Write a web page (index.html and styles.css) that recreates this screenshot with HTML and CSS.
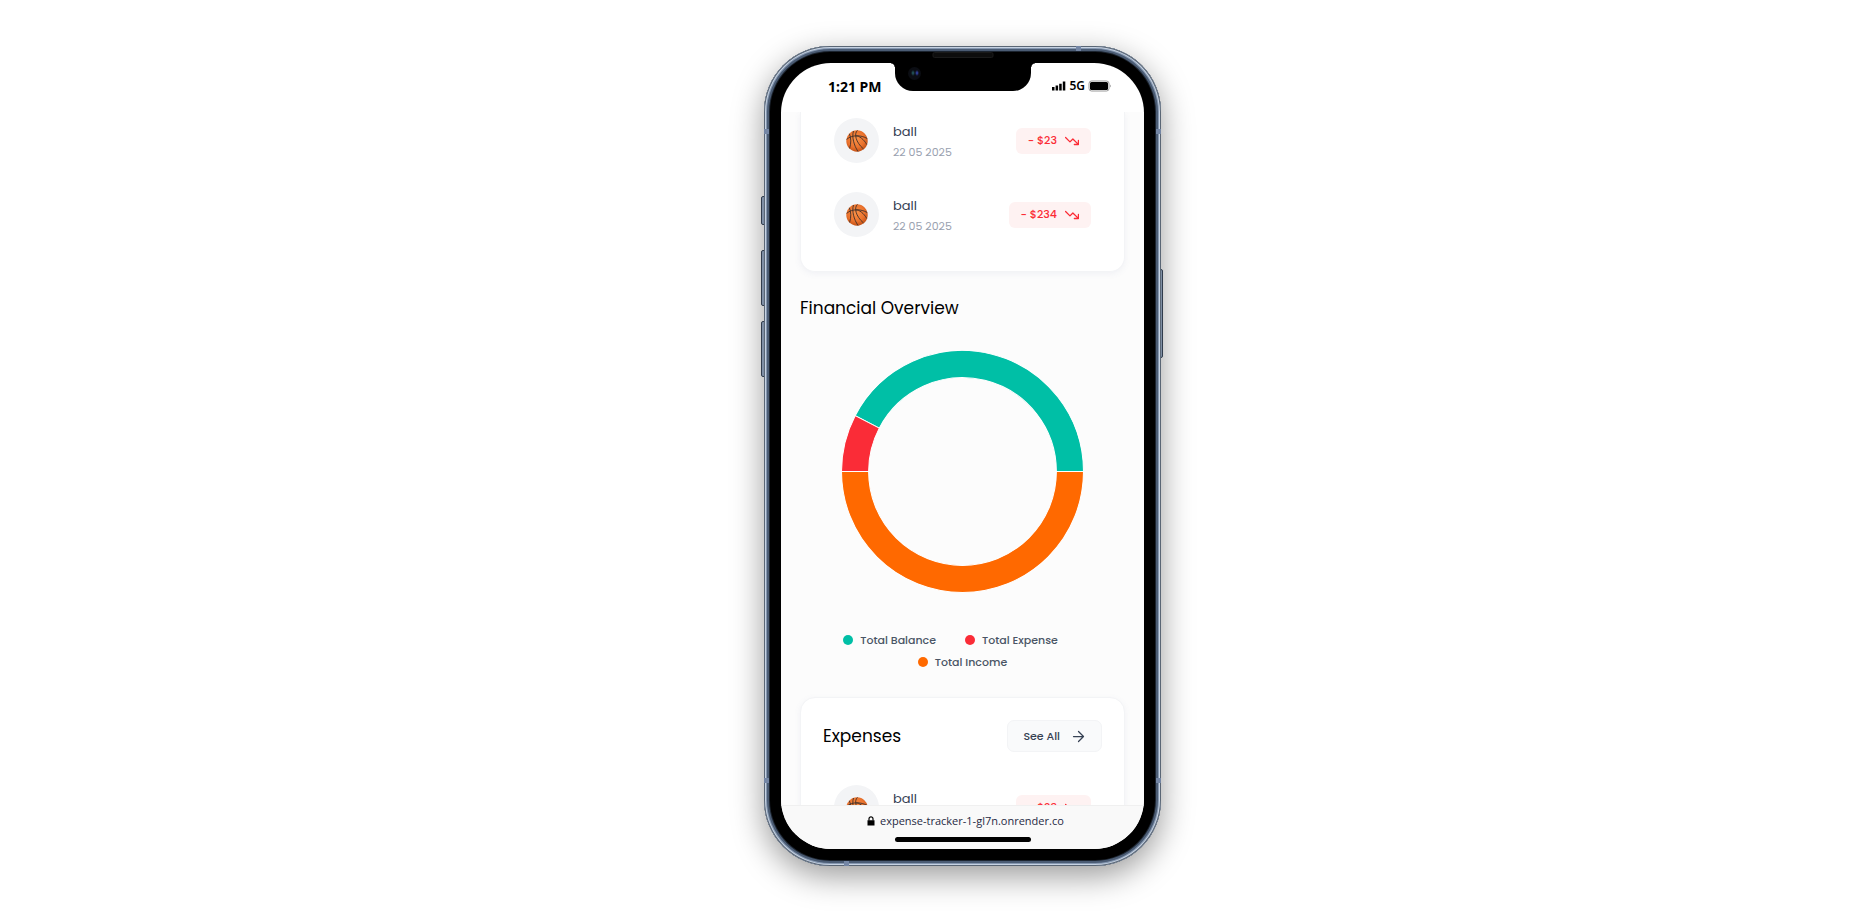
FILE: index.html
```html
<!DOCTYPE html>
<html lang="en">
<head>
<meta charset="utf-8">
<meta name="viewport" content="width=device-width, initial-scale=1">
<title>Expense Tracker</title>
<link rel="stylesheet" href="styles.css">
</head>
<body>
<svg class="defs" width="0" height="0" aria-hidden="true">
  <defs>
    <radialGradient id="ball-fill" cx="0.45" cy="0.4" r="0.62">
      <stop offset="0" stop-color="#fb9247"/>
      <stop offset="0.65" stop-color="#ea722d"/>
      <stop offset="1" stop-color="#c04f14"/>
    </radialGradient>
    <symbol id="ball" viewBox="0 0 22 22">
      <circle cx="11" cy="11" r="10.7" fill="url(#ball-fill)"/>
      <g fill="none" stroke="#41302a" stroke-width="0.9">
        <path d="M7.500 1C5.600 7 8 15.500 12 21.500"/>
        <path d="M11.500 0.400C7.800 3.500 9.500 12 17.500 19"/>
        <path d="M0.600 9.400C6 4.600 15 4.800 21.300 8.600"/>
        <path d="M10 6C13 5.500 18 9.500 20.800 14.500"/>
        <path d="M3.400 3.800C5.200 8 5.200 13.500 3.600 18.400"/>
      </g>
    </symbol>
    <symbol id="trend-down" viewBox="0 0 24 24">
      <path d="M1 6L8.500 13.500L13.500 8.500L22 17M16 18H23V11" fill="none" stroke="currentColor" stroke-width="2.200" stroke-linecap="round" stroke-linejoin="round"/>
    </symbol>
  </defs>
</svg>
<main class="stage">
  <div class="phone">
    <span class="key key-mute"></span>
    <span class="key key-up"></span>
    <span class="key key-down"></span>
    <span class="key key-power"></span>
    <div class="frame">
      <span class="band band-left-top"></span>
      <span class="band band-left-bottom"></span>
      <span class="band band-right-top"></span>
      <span class="band band-right-bottom"></span>
      <span class="band band-top"></span>
      <span class="band band-bottom"></span>
      <span class="speaker"></span>
      <div class="screen">
        <div class="notch"><span class="camera"></span></div>
        <header class="status">
          <time class="clock">1:21 PM</time>
          <div class="signals">
            <svg width="14" height="10" viewBox="0 0 14 10" aria-hidden="true">
              <path d="M0 6h2.500v3.500H0zM3.600 4.500h2.500v5H3.600zM7.200 2.800h2.500v6.700H7.200zM10.800 0.500h2.500v9h-2.500z"/>
            </svg>
            <span>5G</span>
            <svg width="24" height="12" viewBox="0 0 24 12" aria-hidden="true">
              <rect x="1" y="1" width="20" height="10" rx="2.500" fill="none" stroke="#999"/>
              <rect x="2" y="2" width="18" height="8" rx="1.500"/>
              <path d="M22 4.500q1.500 1.500 0 3z" fill="#777"/>
            </svg>
          </div>
        </header>
        <div class="content">
          <section class="card card-top">
            <ul class="rows">
              <li class="row">
                <span class="avatar"><svg width="22" height="22"><use href="#ball"/></svg></span>
                <div class="info"><p class="name">ball</p><p class="date">22 05 2025</p></div>
                <span class="pill">- $23 <svg width="14" height="14"><use href="#trend-down"/></svg></span>
              </li>
              <li class="row">
                <span class="avatar"><svg width="22" height="22"><use href="#ball"/></svg></span>
                <div class="info"><p class="name">ball</p><p class="date">22 05 2025</p></div>
                <span class="pill">- $234 <svg width="14" height="14"><use href="#trend-down"/></svg></span>
              </li>
            </ul>
          </section>
          <section class="overview">
            <h2 class="title">Financial Overview</h2>
            <svg class="donut" viewBox="-121 -121 242 242" role="img" aria-label="Balance, expense and income">
              <g stroke="#fff" stroke-width="1">
                <path fill="#00bfa6" d="M120.500 0A120.500 120.500 0 0 0 -106.900 -55.600L-82.900 -43.200A93.500 93.500 0 0 1 93.500 0Z"/>
                <path fill="#fa2c37" d="M-106.900 -55.600A120.500 120.500 0 0 0 -120.500 0L-93.500 0A93.500 93.500 0 0 1 -82.900 -43.200Z"/>
                <path fill="#ff6900" d="M-120.500 0A120.500 120.500 0 0 0 120.500 0L93.500 0A93.500 93.500 0 0 1 -93.500 0Z"/>
              </g>
            </svg>
            <ul class="legend">
              <li class="key-item balance">Total Balance</li>
              <li class="key-item expense">Total Expense</li>
              <li class="key-item income">Total Income</li>
            </ul>
          </section>
          <section class="card card-next">
            <div class="card-head">
              <h2 class="title">Expenses</h2>
              <button class="see-all" type="button">See All
                <svg width="15" height="15" viewBox="0 0 24 24" fill="none" stroke="currentColor" stroke-width="2" stroke-linecap="round" stroke-linejoin="round" aria-hidden="true"><path d="M4 12H20M12 4L20 12L12 20"/></svg>
              </button>
            </div>
            <ul class="rows">
              <li class="row">
                <span class="avatar"><svg width="22" height="22"><use href="#ball"/></svg></span>
                <div class="info"><p class="name">ball</p><p class="date"></p></div>
                <span class="pill">- $23 <svg width="14" height="14"><use href="#trend-down"/></svg></span>
              </li>
            </ul>
          </section>
        </div>
        <footer class="browser-bar">
          <div class="address">
            <svg width="8" height="10" viewBox="0 0 8 10" aria-hidden="true"><path d="M0.500 4.200h7v5.300h-7z"/><path d="M2 4.500V2.800a2 2 0 0 1 4 0v1.700" fill="none" stroke="#000" stroke-width="1.200"/></svg>
            <span class="url">expense-tracker-1-gl7n.onrender.com</span>
          </div>
          <span class="home"></span>
        </footer>
      </div>
    </div>
  </div>
</main>
</body>
</html>
```

FILE: styles.css
```css
* { box-sizing: border-box; }

body {
  margin: 0;
  background: #fff;
  font-family: Poppins, Inter, "Noto Sans", sans-serif;
  color: #000;
}

ul, p, h2 { margin: 0; padding: 0; list-style: none; }
svg { display: block; flex: none; }
.defs { position: absolute; }

.stage {
  height: 100vh;
  min-height: 600px;
  padding: 46px 0 45px 52px;
  display: flex;
  justify-content: center;
}

.phone {
  position: relative;
  height: 100%;
  aspect-ratio: 397 / 820;
}

.frame {
  position: relative;
  height: 100%;
  padding: 17px;
  border-radius: 66px;
  background: #000;
  box-shadow:
    inset 0 0 0 1px #5a6675,
    inset 0 0 0 2px #c6d2e2,
    inset 0 0 0 3px #8597b0,
    inset 0 0 0 5px #4b5c74,
    inset 0 0 0 6px #1c242f,
    0 10px 32px rgba(0, 0, 0, 0.4);
}

.key {
  position: absolute;
  left: -3px;
  width: 5px;
  border: 1px solid #3c4a5e;
  border-radius: 2px;
  background: #9cb0cc;
}
.key-mute { top: 150px; height: 29px; }
.key-up { top: 204px; height: 56px; }
.key-down { top: 275px; height: 56px; }
.key-power { top: 223px; left: auto; right: -2px; height: 89px; }

.band { position: absolute; width: 5px; height: 5px; background: #7486a5; }
.band-left-top { left: 0; top: 83px; }
.band-left-bottom { left: 0; bottom: 83px; }
.band-right-top { right: 0; top: 83px; }
.band-right-bottom { right: 0; bottom: 83px; }
.band-top { right: 80px; top: 0; }
.band-bottom { left: 80px; bottom: 0; }

.speaker {
  position: absolute;
  top: 6px;
  left: 50%;
  width: 61px;
  height: 6px;
  transform: translateX(-50%);
  border-radius: 2px;
  border: 1px solid #1a1a1a;
  background: #0d0d0d;
}

.screen {
  position: relative;
  height: 100%;
  overflow: hidden;
  display: flex;
  flex-direction: column;
  border-radius: 50px;
  background: #fff;
}

.notch {
  position: absolute;
  top: 0;
  left: 50%;
  width: 136px;
  height: 28px;
  transform: translateX(-50%);
  border-radius: 0 0 18px 18px;
  background: #000;
}
.notch::before, .notch::after {
  content: "";
  position: absolute;
  top: 0;
  width: 4px;
  height: 4px;
}
.notch::before { right: 100%; background: radial-gradient(circle at 0 100%, transparent 3px, #000 4px); }
.notch::after { left: 100%; background: radial-gradient(circle at 100% 100%, transparent 3px, #000 4px); }

.camera {
  position: absolute;
  left: 13px;
  top: 4px;
  width: 13px;
  height: 13px;
  border-radius: 50%;
  background: radial-gradient(ellipse 2px 3px at 5px 6px, #1f4a50 30%, transparent), radial-gradient(ellipse 2px 3px at 9px 6px, #2c3a90 30%, transparent), #0b0d13;
}

.status {
  height: 49px;
  flex: none;
  display: flex;
  align-items: flex-start;
  justify-content: space-between;
  padding: 14px 32px 0 47px;
}
.clock { font: 700 14px/20px "Noto Sans", sans-serif; }
.signals {
  display: flex;
  align-items: center;
  gap: 3px;
  font: 600 12px/18px "Noto Sans", sans-serif;
}

.content {
  flex: 1;
  min-height: 0;
  overflow: hidden;
  padding: 0 19px;
  background: #fcfcfc;
}

.card {
  border: 1px solid #f3f4f6;
  border-radius: 15px;
  background: #fff;
  box-shadow: 0 2px 6px rgba(100, 110, 160, 0.08);
}
.card-top {
  border-top: 0;
  border-radius: 0 0 15px 15px;
  padding: 6px 0 34px;
}
.rows {
  display: flex;
  flex-direction: column;
  gap: 29px;
  padding: 0 33px;
}
.row { display: flex; align-items: center; gap: 14px; height: 45px; }
.avatar {
  width: 45px;
  height: 45px;
  flex: none;
  display: grid;
  place-items: center;
  border-radius: 50%;
  background: #f3f4f6;
}
.info { flex: 1; padding-top: 2px; }
.name { font-size: 13px; line-height: 20px; color: #364153; }
.date { min-height: 20px; font-size: 11px; line-height: 20px; color: #99a1af; }
.pill {
  display: flex;
  align-items: center;
  gap: 8px;
  height: 26px;
  padding: 0 12px;
  border-radius: 6px;
  background: #fef2f2;
  color: #fb2c36;
  font-size: 11px;
  font-weight: 500;
}

.overview { padding: 24px 0 25px; }
.title { font-size: 17px; font-weight: 400; line-height: 24px; }
.donut { width: 243px; height: 243px; margin: 30px auto 37px; }
.legend {
  display: flex;
  flex-wrap: wrap;
  justify-content: center;
  gap: 2px 5px;
  margin: 0 32px;
  font-size: 11px;
  font-weight: 500;
  line-height: 20px;
  color: #4a5565;
}
.key-item { display: flex; align-items: center; gap: 7px; }
.key-item:not(:last-child) { margin-right: 24px; }
.key-item::before { content: ""; width: 10px; height: 10px; border-radius: 50%; background: currentColor; }
.balance::before { background: #00bfa6; }
.expense::before { background: #fa2c37; }
.income::before { background: #ff6900; }

.card-head {
  display: flex;
  align-items: center;
  justify-content: space-between;
  padding: 22px 22px 33px 22px;
}
.see-all {
  display: flex;
  align-items: center;
  gap: 11px;
  height: 32px;
  padding: 0 15px;
  border: 1px solid #f3f4f6;
  border-radius: 7px;
  background: #f9fafb;
  color: #364153;
  font: inherit;
  font-size: 11px;
  font-weight: 500;
}

.browser-bar {
  height: 44px;
  flex: none;
  display: flex;
  flex-direction: column;
  align-items: center;
  justify-content: space-between;
  padding: 6px 0 7px;
  border-top: 1px solid #f0f0f0;
  background: #f9f9f9;
}
.address { display: flex; align-items: center; gap: 5px; padding-left: 6px; }
.url {
  width: 184px;
  overflow: hidden;
  white-space: nowrap;
  font: 11px/18px "Open Sans", "Noto Sans", sans-serif;
  color: #1f2a44;
}
.home { width: 136px; height: 5px; border-radius: 3px; background: #000; }
```
